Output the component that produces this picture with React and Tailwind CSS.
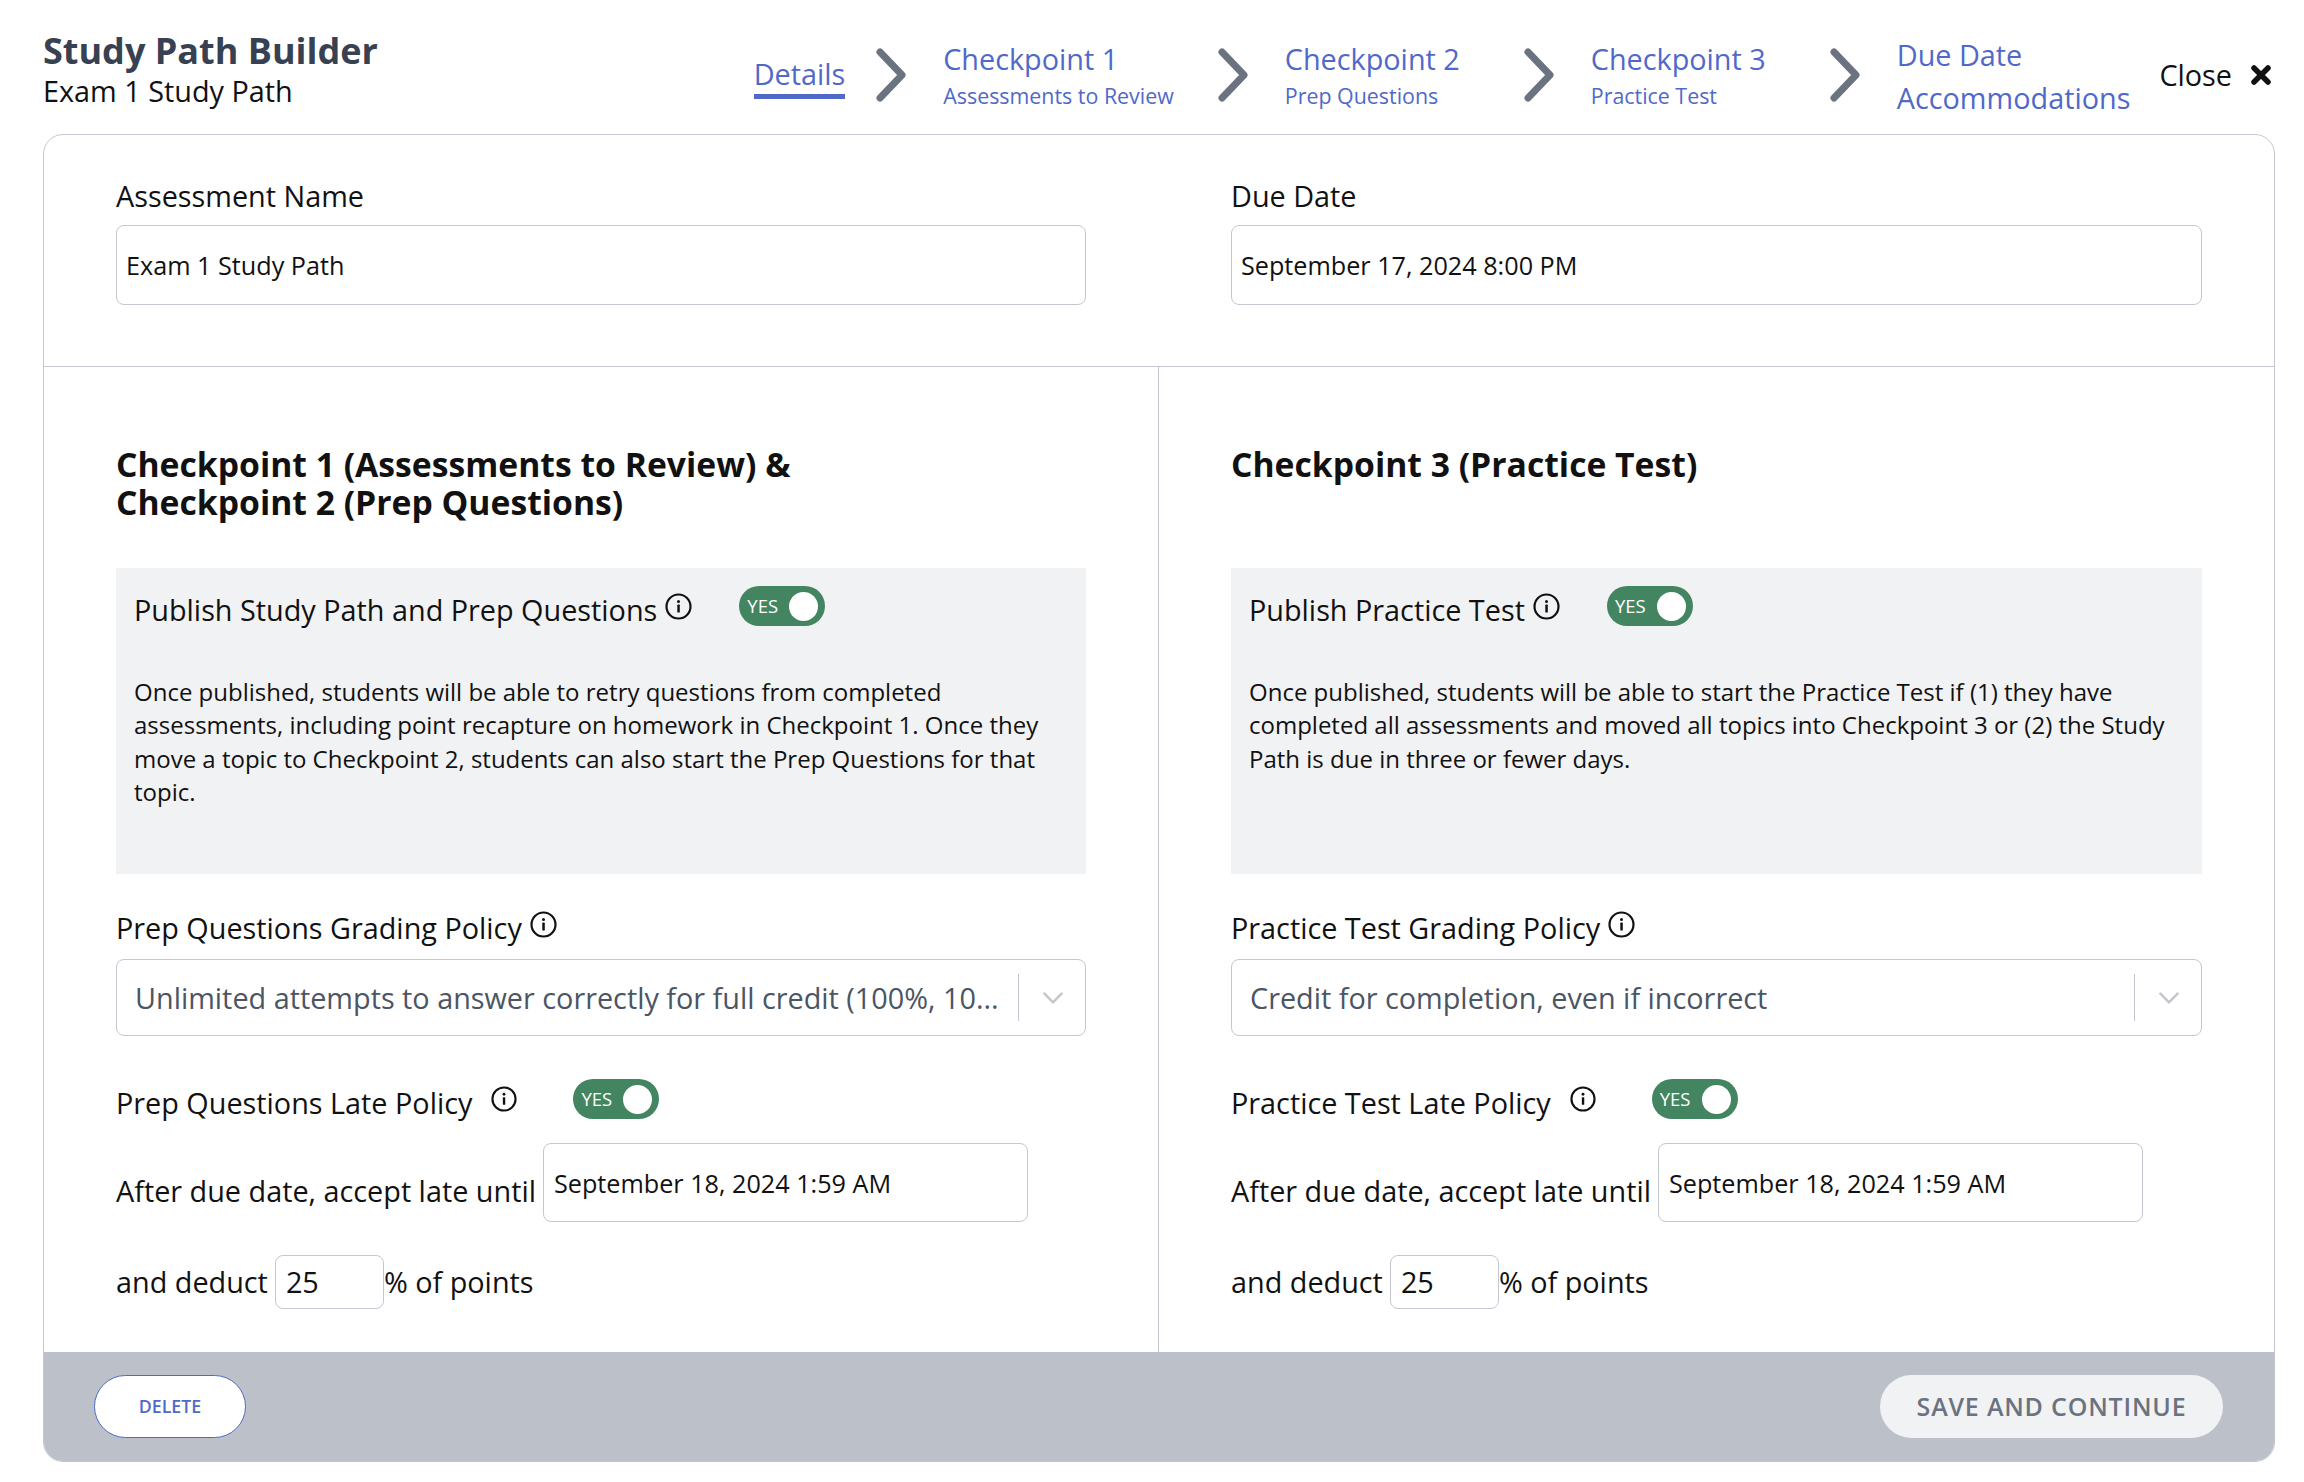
import React from "react";

function Info({ className = "" }) {
  return (
    <svg viewBox="0 0 27 27" className={`shrink-0 ${className}`} fill="none">
      <circle cx="13.5" cy="13.5" r="12" stroke="#111" strokeWidth="2.2" />
      <circle cx="13.5" cy="8.6" r="1.5" fill="#111" />
      <rect x="12.3" y="11.6" width="2.5" height="8" rx="0.6" fill="#111" />
    </svg>
  );
}

function Toggle({ className = "" }) {
  return (
    <div className={`flex h-[40px] w-[86px] shrink-0 items-center justify-between rounded-full bg-[#438561] pl-[8px] pr-[7px] ${className}`}>
      <span className="text-[18.5px] leading-none text-white">YES</span>
      <span className="h-[29px] w-[29px] rounded-full bg-white" />
    </div>
  );
}

function Chevron({ className = "" }) {
  return (
    <svg viewBox="0 0 32 54" className={`h-[54px] w-[32px] shrink-0 ${className}`} fill="none">
      <path d="M5 4 L27 27 L5 50" stroke="#6b7280" strokeWidth="7" strokeLinecap="round" strokeLinejoin="round" />
    </svg>
  );
}

function Step({ title, sub, className = "" }) {
  return (
    <div className={`flex flex-col text-[#5069c9] ${className}`}>
      <span className="text-[28.8px] leading-[38px]">{title}</span>
      <span className="mt-[3px] text-[21.4px] leading-[30px]">{sub}</span>
    </div>
  );
}

function Panel({ first, heading, publish, body, gradeLabel, grade, lateLabel }) {
  return (
    <div className={`min-w-0 pl-[72px] pr-[72px] pt-[78px] pb-[43px] ${first ? "border-r border-[#c5c7d0]" : ""}`}>
      <h2 className="h-[76px] text-[33.7px] font-bold leading-[38px] text-[#111]">{heading}</h2>
      <div className="mt-[47px] h-[306px] bg-[#f1f2f4] px-[18px] pt-[18px]">
        <div className="flex items-start">
          <span className="mt-[5px] text-[28.8px] leading-[38px] text-[#111]">{publish}</span>
          <Info className="ml-[8px] mt-[7px] h-[27px] w-[27px]" />
          <Toggle className="ml-[47px]" />
        </div>
        <p className="mt-[46px] text-[24px] leading-[33.4px] text-[#111]">{body}</p>
      </div>
      <div className="mt-[35px] flex items-start">
        <span className="text-[28.8px] leading-[38px] text-[#111]">{gradeLabel}</span>
        <Info className="ml-[8px] mt-[2px] h-[27px] w-[27px]" />
      </div>
      <div className="mt-[12px] flex h-[77px] items-center rounded-[8px] border border-[#c5c7d0] pl-[18px]">
        <span className="min-w-0 flex-1 truncate text-[28.8px] text-[#4b5563]">{grade}</span>
        <span className="ml-[12px] h-[47px] w-px bg-[#c5c7d0]" />
        <svg viewBox="0 0 24 14" className="ml-[23px] mr-[21px] h-[12px] w-[22px] shrink-0" fill="none">
          <path d="M2 2 L12 12 L22 2" stroke="#c5c7cc" strokeWidth="3" strokeLinecap="round" strokeLinejoin="round" />
        </svg>
      </div>
      <div className="mt-[43px] flex h-[40px] items-start">
        <span className="mt-[5px] text-[28.8px] leading-[38px] text-[#111]">{lateLabel}</span>
        <Info className="ml-[19px] mt-[7px] h-[26px] w-[26px]" />
        <Toggle className="ml-[56px]" />
      </div>
      <div className="mt-[24px] flex h-[79px] items-end gap-[7px]">
        <span className="mb-[12px] text-[28.8px] leading-[38px] text-[#111]">After due date, accept late until</span>
        <div className="flex h-[79px] w-[485px] items-center rounded-[8px] border border-[#c5c7d0] pl-[10px] pt-[3px] text-[25.2px] text-[#111]">
          September 18, 2024 1:59 AM
        </div>
      </div>
      <div className="mt-[33px] flex h-[54px] items-center">
        <span className="text-[28.8px] leading-[38px] text-[#111]">and deduct</span>
        <div className="ml-[7px] flex h-[54px] w-[109px] items-center rounded-[8px] border border-[#c5c7d0] pl-[10px] text-[28.8px] text-[#111]">25</div>
        <span className="text-[28.8px] leading-[38px] text-[#111]">% of points</span>
      </div>
    </div>
  );
}

export default function App() {
  return (
    <div className="h-[1482px] w-[2304px] bg-white pl-[43px] pr-[29px] font-['Open_Sans',sans-serif]">
      <header className="flex h-[134px] items-start justify-between pr-[3px]">
        <div className="pt-[27px]">
          <h1 className="text-[36px] font-bold leading-[48px] text-[#374151]">Study Path Builder</h1>
          <p className="text-[28.8px] leading-[32px] text-[#111]">Exam 1 Study Path</p>
        </div>
        <nav className="flex items-start">
          <div className="mt-[55px] flex flex-col text-[#5069c9]">
            <span className="text-[28.8px] leading-[38px]">Details</span>
            <span className="mt-[1px] h-[5px] w-full bg-[#5069c9]" />
          </div>
          <Chevron className="ml-[30px] mt-[48px]" />
          <Step className="ml-[36px] mt-[40px]" title="Checkpoint 1" sub="Assessments to Review" />
          <Chevron className="ml-[43px] mt-[48px]" />
          <Step className="ml-[36px] mt-[40px]" title="Checkpoint 2" sub="Prep Questions" />
          <Chevron className="ml-[63px] mt-[48px]" />
          <Step className="ml-[36px] mt-[40px]" title="Checkpoint 3" sub="Practice Test" />
          <Chevron className="ml-[63px] mt-[48px]" />
          <div className="ml-[36px] mt-[33px] flex flex-col text-[28.8px] leading-[43px] text-[#5069c9]">
            <span>Due Date</span>
            <span>Accommodations</span>
          </div>
          <span className="ml-[29px] mt-[56px] text-[28.8px] leading-[38px] text-[#111]">Close</span>
          <svg viewBox="0 0 22 20" className="ml-[18px] mt-[65px] h-[20px] w-[22px]" fill="none">
            <path d="M4 3 L18 17 M18 3 L4 17" stroke="#111" strokeWidth="5.5" strokeLinecap="round" />
          </svg>
        </nav>
      </header>
      <main className="overflow-hidden rounded-[20px] border border-[#c5c7d0]">
        <section className="grid grid-cols-2 border-b border-[#c5c7d0] pt-[42px] pb-[61px]">
          <div className="pl-[72px] pr-[73px]">
            <label className="block text-[28.8px] leading-[38px] text-[#111]">Assessment Name</label>
            <div className="mt-[10px] flex h-[80px] items-center rounded-[8px] border border-[#c5c7d0] pl-[9px] pt-[2px] text-[25.2px] text-[#111]">Exam 1 Study Path</div>
          </div>
          <div className="pl-[72px] pr-[72px]">
            <label className="block text-[28.8px] leading-[38px] text-[#111]">Due Date</label>
            <div className="mt-[10px] flex h-[80px] items-center rounded-[8px] border border-[#c5c7d0] pl-[9px] pt-[2px] text-[25.2px] text-[#111]">September 17, 2024 8:00 PM</div>
          </div>
        </section>
        <section className="grid grid-cols-2">
          <Panel
            first
            heading={<>Checkpoint 1 (Assessments to Review) &amp;<br />Checkpoint 2 (Prep Questions)</>}
            publish="Publish Study Path and Prep Questions"
            body="Once published, students will be able to retry questions from completed assessments, including point recapture on homework in Checkpoint 1. Once they move a topic to Checkpoint 2, students can also start the Prep Questions for that topic."
            gradeLabel="Prep Questions Grading Policy"
            grade="Unlimited attempts to answer correctly for full credit (100%, 10..."
            lateLabel="Prep Questions Late Policy"
          />
          <Panel
            heading="Checkpoint 3 (Practice Test)"
            publish="Publish Practice Test"
            body="Once published, students will be able to start the Practice Test if (1) they have completed all assessments and moved all topics into Checkpoint 3 or (2) the Study Path is due in three or fewer days."
            gradeLabel="Practice Test Grading Policy"
            grade="Credit for completion, even if incorrect"
            lateLabel="Practice Test Late Policy"
          />
        </section>
        <footer className="flex h-[109px] items-start justify-between bg-[#bcc0c8] pl-[50px] pr-[51px] pt-[23px]">
          <button className="h-[63px] w-[152px] rounded-full border border-[#5069c9] bg-white text-[17.8px] font-semibold text-[#5069c9]">DELETE</button>
          <button className="h-[63px] w-[343px] rounded-full bg-[#f1f2f4] text-[25px] font-semibold tracking-[0.8px] text-[#6b7280]">SAVE AND CONTINUE</button>
        </footer>
      </main>
    </div>
  );
}
